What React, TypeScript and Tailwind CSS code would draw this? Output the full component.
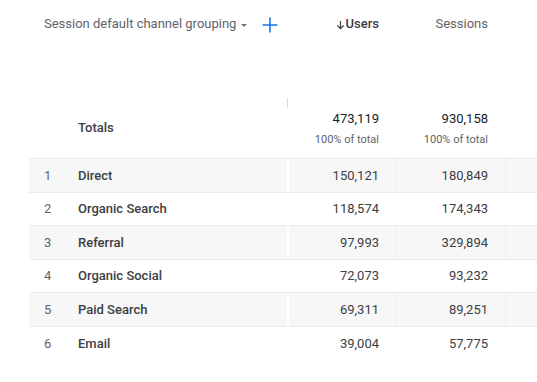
const rows = [
  { n: 1, name: 'Direct', users: '150,121', sessions: '180,849' },
  { n: 2, name: 'Organic Search', users: '118,574', sessions: '174,343' },
  { n: 3, name: 'Referral', users: '97,993', sessions: '329,894' },
  { n: 4, name: 'Organic Social', users: '72,073', sessions: '93,232' },
  { n: 5, name: 'Paid Search', users: '69,311', sessions: '89,251' },
  { n: 6, name: 'Email', users: '39,004', sessions: '57,775' },
];

const App = () => {
  return (
    <div className="w-[537px] h-[382px] overflow-hidden bg-white font-['Roboto',sans-serif] text-[13px]">
      <div className="ml-[29px] w-[520px]">
        {/* header */}
        <div className="grid grid-cols-[258px_109px_109px_44px] h-[46px] pt-[2px] items-center">
          <div className="flex items-center pl-[15px] text-[#5f6368]">
            <span>Session default channel grouping</span>
            <svg width="10" height="10" viewBox="0 0 10 10" className="ml-[3px] mt-px">
              <path d="M2 4 L8 4 L5 7 Z" fill="#777" />
            </svg>
            <svg width="18" height="18" viewBox="0 0 18 18" className="ml-[12px] mt-[2px]">
              <path d="M9 1.5 V16.5 M1.5 9 H16.5" stroke="#1a73e8" strokeWidth="1.6" />
            </svg>
          </div>
          <div className="flex items-center justify-end pr-[17px] font-medium text-[#3c4043]">
            <svg width="9" height="10" viewBox="0 0 9 10" className="mr-px mt-px">
              <path d="M4.5 1 V8.5 M1.3 5.5 L4.5 8.7 L7.7 5.5" stroke="#3c4043" strokeWidth="1.2" fill="none" />
            </svg>
            <span>Users</span>
          </div>
          <div className="text-right pr-[17px] text-[#5f6368]">Sessions</div>
          <div />
        </div>

        {/* totals */}
        <div className="grid grid-cols-[258px_109px_109px_44px] h-[112px]">
          <div className="flex items-end pl-[49px] pb-[21px] font-medium text-[#3c4043]">Totals</div>
          <div className="flex flex-col justify-between pr-[17px]">
            <div className="mt-[52px] h-[10px] w-px bg-[#dadce0]" />
            <div className="flex flex-col items-end pb-[10px]">
              <span className="leading-[20px] text-[#202124]">473,119</span>
              <span className="mt-[3px] text-[11px] leading-[16px] text-[#5f6368]">100% of total</span>
            </div>
          </div>
          <div className="flex flex-col items-end justify-end pr-[17px] pb-[10px]">
            <span className="leading-[20px] text-[#202124]">930,158</span>
            <span className="mt-[3px] text-[11px] leading-[16px] text-[#5f6368]">100% of total</span>
          </div>
          <div />
        </div>

        {/* rows */}
        <div className="border-t border-[#ebebeb]">
          {rows.map((r, i) => {
            const odd = i % 2 === 0;
            const last = i === rows.length - 1;
            return (
              <div
                key={r.n}
                className={`grid grid-cols-[258px_109px_109px_44px] h-[33.6px] ${last ? '' : 'border-b border-[#ebebeb]'} ${odd ? 'bg-[#f7f7f7]' : 'bg-white'}`}
              >
                <div className="flex items-center pl-[15px]">
                  <span className="w-[34px] text-[#5f6368]">{r.n}</span>
                  <span className="font-medium text-[#3c4043]">{r.name}</span>
                </div>
                <div className={`flex items-center justify-end pr-[17px] text-[#3c4043] ${odd ? 'border-l-2 border-white' : ''}`}>
                  {r.users}
                </div>
                <div className={`flex items-center justify-end pr-[17px] text-[#3c4043] ${odd ? 'border-l border-[#efefef]' : ''}`}>
                  {r.sessions}
                </div>
                <div className={odd ? 'border-l border-[#efefef]' : ''} />
              </div>
            );
          })}
        </div>
      </div>
    </div>
  );
};

export default App;
